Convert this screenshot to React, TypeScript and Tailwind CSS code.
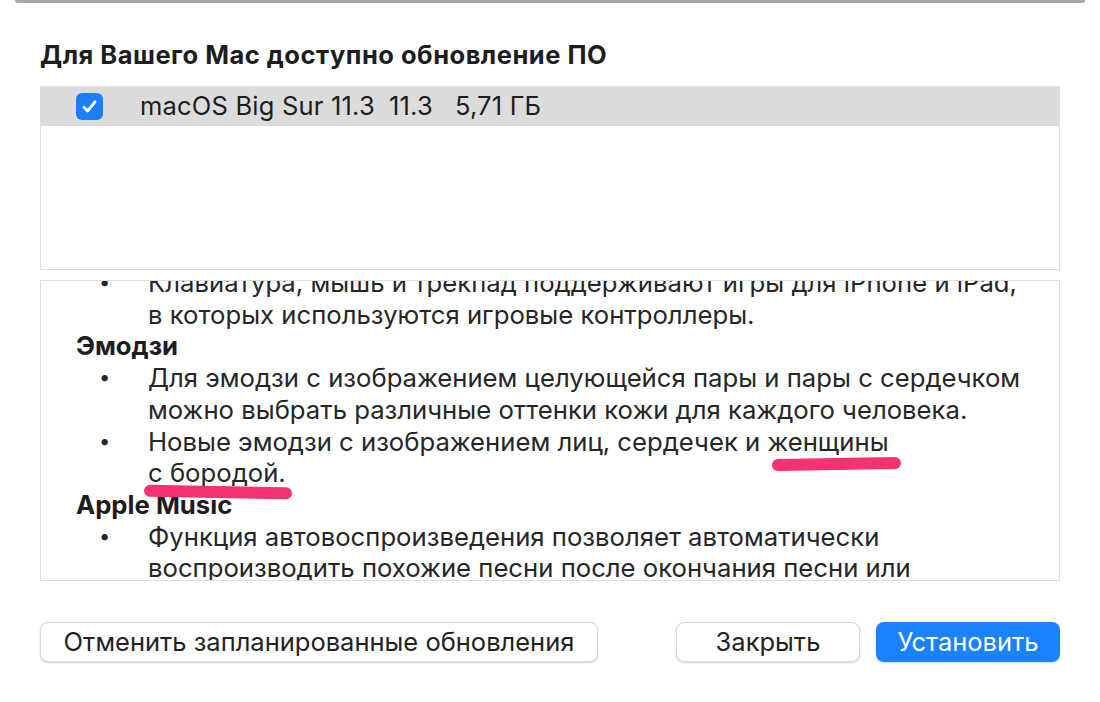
import React from 'react'

const notes: { kind: 'h' | 'li'; lines: string[] }[] = [
  { kind: 'li', lines: ['Клавиатура, мышь и трекпад поддерживают игры для iPhone и iPad,', 'в которых используются игровые контроллеры.'] },
  { kind: 'h', lines: ['Эмодзи'] },
  { kind: 'li', lines: ['Для эмодзи с изображением целующейся пары и пары с сердечком', 'можно выбрать различные оттенки кожи для каждого человека.'] },
  { kind: 'li', lines: ['Новые эмодзи с изображением лиц, сердечек и женщины', 'с бородой.'] },
  { kind: 'h', lines: ['Apple Music'] },
  { kind: 'li', lines: ['Функция автовоспроизведения позволяет автоматически', 'воспроизводить похожие песни после окончания песни или'] },
]

function Check() {
  return (
    <div className="flex h-[27px] w-[27px] items-center justify-center rounded-[6px] bg-[#1b7ff8]">
      <svg width="17" height="17" viewBox="0 0 17 17" fill="none">
        <path d="M3 9.2l3.6 3.8L14 3.8" stroke="white" strokeWidth="2.8" strokeLinecap="round" strokeLinejoin="round" />
      </svg>
    </div>
  )
}

export default function App() {
  return (
    <div className="relative h-[702px] w-[1100px] overflow-hidden bg-white text-[#1d1d1f]" style={{ fontFamily: 'Inter, "Noto Sans", sans-serif' }}>
      <div className="mx-[15px] h-[3px] rounded-b-sm bg-[#a8a8a8]" />

      <div className="px-10 pt-[37px]">
        <h1 className="text-[25.5px] font-bold leading-[30px] tracking-[0.5px]">Для Вашего Мас доступно обновление ПО</h1>

        <div className="mt-4 h-[184px] border-[1.5px] border-[#dedede]">
          <div className="flex h-[39px] items-center bg-[#dcdcdc] pl-[35px] text-[25.5px] tracking-[0.2px]">
            <Check />
            <span className="ml-[37px]">macOS Big Sur 11.3</span>
            <span className="ml-[14px]">11.3</span>
            <span className="ml-[22px]">5,71 ГБ</span>
          </div>
        </div>

        <div className="relative mt-[10px] h-[301px] overflow-hidden border-[1.5px] border-[#dedede]">
          <div className="-mt-[14px] text-[25.7px] leading-[31.7px] text-[#262626]">
            {notes.map((n, i) =>
              n.kind === 'h' ? (
                <div key={i} className="pl-[35px] font-bold text-[#1d1d1f]">{n.lines[0]}</div>
              ) : (
                <div key={i} className="flex">
                  <div className="w-[107px] pl-[58px] text-[20px]">•</div>
                  <div>
                    {n.lines.map((l, j) => (
                      <div key={j} className="whitespace-nowrap">{l}</div>
                    ))}
                  </div>
                </div>
              )
            )}
          </div>
          <div className="absolute left-[731px] top-[177px] h-[12px] w-[129px] -rotate-[1deg] rounded-full bg-[#f4336e]" />
          <div className="absolute left-[103px] top-[205px] h-[12px] w-[148px] rotate-[1deg] rounded-full bg-[#f4336e]" />
        </div>

        <div className="mt-[41px] flex items-center text-[25.5px] text-[#222]">
          <button className="h-10 w-[558px] rounded-lg border border-[#d6d6d6] bg-white shadow-[0_1px_2px_rgba(0,0,0,0.18)]">Отменить запланированные обновления</button>
          <div className="flex-1" />
          <button className="h-10 w-[184px] rounded-lg border border-[#d6d6d6] bg-white shadow-[0_1px_2px_rgba(0,0,0,0.18)]">Закрыть</button>
          <button className="ml-4 h-10 w-[184px] rounded-lg bg-[#1a82fb] text-white shadow-[0_1px_2px_rgba(0,0,0,0.18)]">Установить</button>
        </div>
      </div>
    </div>
  )
}
